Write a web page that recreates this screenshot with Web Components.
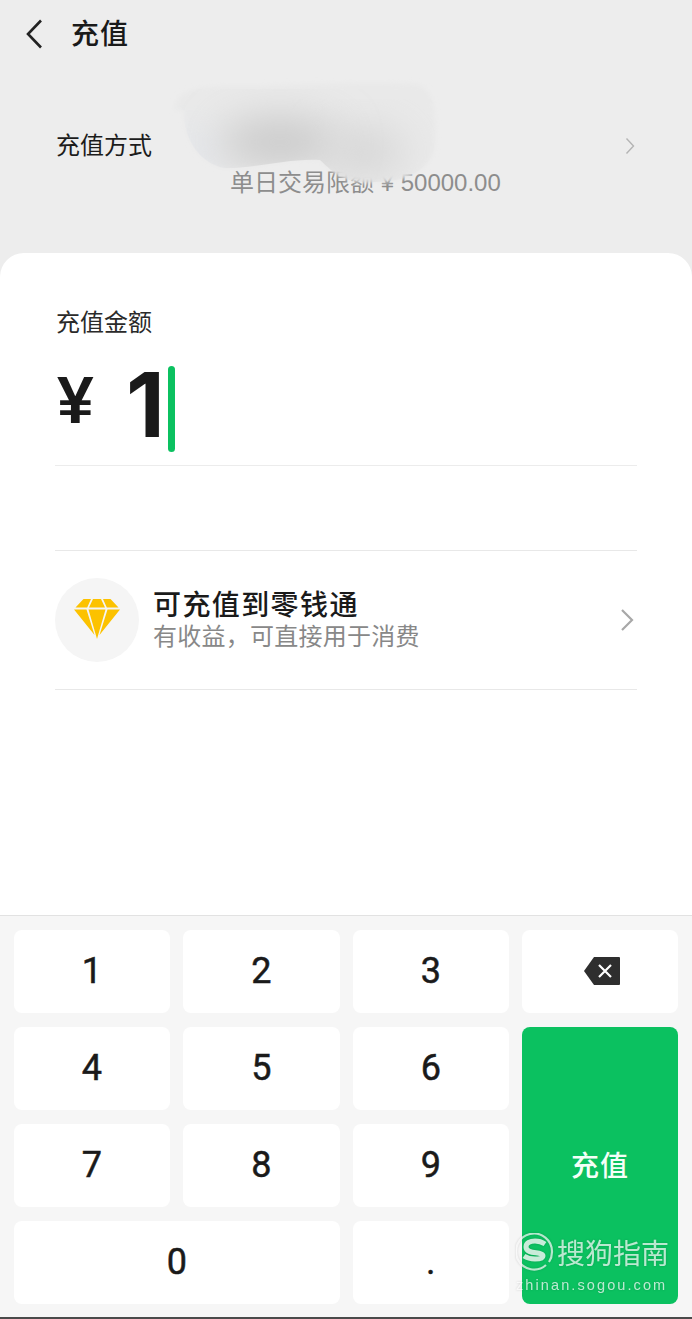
<!DOCTYPE html>
<html lang="zh">
<head>
<meta charset="utf-8">
<title>充值</title>
<style>
html, body { margin: 0; padding: 0; }
body {
  width: 692px;
  height: 1319px;
  overflow: hidden;
  background: #ededed;
  font-family: "Liberation Sans", "Noto Sans CJK SC", sans-serif;
  color: #1a1a1a;
}
</style>
</head>
<body>
<recharge-page></recharge-page>

<script>
const CJK = `"Noto Sans CJK SC", "Liberation Sans", sans-serif`;

class TopBar extends HTMLElement {
  constructor() {
    super();
    this.attachShadow({ mode: "open" });
    this.shadowRoot.innerHTML = `
<style>
:host { display: flex; align-items: center; height: 66px; padding-left: 25px; box-sizing: border-box; }
svg { display: block; width: 18px; height: 30px; margin-top: 2px; }
span { margin-left: 28px; margin-bottom: 3px; font: 500 28px/1 ${CJK}; color: #1a1a1a; letter-spacing: 1px; }
</style>
<svg viewBox="0 0 18 30"><path d="M16 1.5 3 15l13 13.5" fill="none" stroke="#222" stroke-width="2.6"/></svg>
<span><slot></slot></span>`;
  }
}
customElements.define("top-bar", TopBar);

class PayMethod extends HTMLElement {
  constructor() {
    super();
    this.attachShadow({ mode: "open" });
    this.shadowRoot.innerHTML = `
<style>
:host { display: flex; position: relative; height: 187px; padding: 63px 56px 0; box-sizing: border-box; }
.label { font: 400 24px/30px ${CJK}; color: #1c1c1c; width: 174px; flex: none; }
.limit { margin-top: 37px; font: 400 24px/30px ${CJK}; color: #8d8d8d; white-space: nowrap; }
.limit b { font: 400 24px/30px "Liberation Sans", sans-serif; }
.arrow { position: absolute; right: 57px; top: 71px; width: 10px; height: 18px; }
.blob { position: absolute; left: 150px; top: 0; width: 310px; height: 130px; }
</style>
<div class="label">充值方式</div>
<div class="limit">单日交易限额<b> ¥ 50000.00</b></div>
<svg class="arrow" viewBox="0 0 10 18"><path d="M1.500 1.500 8.500 9l-7 7.500" fill="none" stroke="#b4b4b4" stroke-width="1.400"/></svg>
<svg class="blob" viewBox="0 0 310 130">
  <defs>
    <filter id="soft" x="-20%" y="-20%" width="140%" height="140%"><feGaussianBlur stdDeviation="2.500"/></filter>
    <filter id="softer" x="-40%" y="-60%" width="180%" height="220%"><feGaussianBlur stdDeviation="20"/></filter>
    <clipPath id="shape"><path d="M24 44C26 18 60 20 110 20c50-3 130-4 156-2 22 4 20 40 19 60-2 24-26 38-60 38-30 2-40-8-55-22-30-2-62 8-95 8-24-4-42-28-41-58z"/></clipPath>
  </defs>
  <path filter="url(#soft)" fill="#e9e9e9" d="M24 44C26 18 60 20 110 20c50-3 130-4 156-2 22 4 20 40 19 60-2 24-26 38-60 38-30 2-40-8-55-22-30-2-62 8-95 8-24-4-42-28-41-58z"/>
  <g clip-path="url(#shape)">
    <ellipse cx="40" cy="88" rx="32" ry="22" fill="#e2e5ea" filter="url(#softer)"/>
    <ellipse cx="130" cy="76" rx="60" ry="24" fill="#c9c9c9" filter="url(#softer)"/>
    <ellipse cx="215" cy="86" rx="40" ry="24" fill="#d6d6d6" filter="url(#softer)"/>
  </g>
</svg>`;
  }
}
customElements.define("pay-method", PayMethod);

class AmountBox extends HTMLElement {
  constructor() {
    super();
    this.attachShadow({ mode: "open" });
    this.shadowRoot.innerHTML = `
<style>
:host { display: block; height: 213px; padding: 53px 55px 0; box-sizing: border-box; }
.title { font: 400 24px/30px ${CJK}; color: #2a2a2a; padding-left: 1px; }
.input { display: flex; align-items: center; height: 86px; margin-top: 30px; border-bottom: 1px solid #ececec; padding-bottom: 13px; }
.yen { font: 700 66px/1 "Liberation Sans", sans-serif; width: 71px; padding-left: 2px; box-sizing: border-box; color: #1a1a1a; margin-bottom: 18px; }
.num { font: 700 90px/1 Inter, sans-serif; color: #1a1a1a; letter-spacing: -2px; margin-bottom: 8px; }
.caret { width: 7px; height: 86px; border-radius: 4px; background: #0bc160; margin-left: 5px; }
</style>
<div class="title">充值金额</div>
<div class="input">
  <span class="yen">¥</span>
  <span class="num">1</span>
  <span class="caret"></span>
</div>`;
  }
}
customElements.define("amount-box", AmountBox);

class PromoRow extends HTMLElement {
  constructor() {
    super();
    this.attachShadow({ mode: "open" });
    this.shadowRoot.innerHTML = `
<style>
:host { display: flex; align-items: center; margin: 84px 55px 0; height: 140px; box-sizing: border-box; border-top: 1px solid #e8e8e8; border-bottom: 1px solid #e8e8e8; }
.icon { flex: none; width: 84px; height: 84px; border-radius: 50%; background: #f5f5f5; display: flex; align-items: center; justify-content: center; margin-right: 14px; }
.icon svg { width: 48px; height: 44px; display: block; }
.text { flex: 1; margin-bottom: 4px; }
.name { font: 500 28px/33px ${CJK}; color: #1a1a1a; letter-spacing: 1.400px; }
.sub { font: 400 24px/30px ${CJK}; color: #888; letter-spacing: 0.250px; }
.arrow { width: 16px; height: 24px; margin-right: 2px; }
</style>
<div class="icon">
  <svg viewBox="0 0 48 44">
    <path fill="#fcc200" d="M10.500 1H18l-3.800 8.600H2.500zM20 1h8l4 8.600H16zM30 1h7.500l8 8.600H33.800zM1 11.500h12.500L21.500 37zM15.500 11.500h17L24 41zM34.500 11.500H47L26.500 37z"/>
  </svg>
</div>
<div class="text">
  <div class="name"><slot name="name"></slot></div>
  <div class="sub"><slot name="sub"></slot></div>
</div>
<svg class="arrow" viewBox="0 0 16 24"><path d="M3 2l10 10L3 22" fill="none" stroke="#a8a8a8" stroke-width="2.200"/></svg>`;
  }
}
customElements.define("promo-row", PromoRow);

class KeyButton extends HTMLElement {
  constructor() {
    super();
    this.attachShadow({ mode: "open" });
    this.shadowRoot.innerHTML = `
<style>
:host { display: flex; align-items: center; justify-content: center; background: #fff; border-radius: 8px; font: 400 36px/1 Roboto, sans-serif; -webkit-text-stroke: 0.5px #1a1a1a; color: #1a1a1a; box-sizing: border-box; }
:host([primary]) { background: #0bc160; color: #f4fff8; -webkit-text-stroke: 0; font: 500 28px/1 ${CJK}; letter-spacing: 1px; padding-bottom: 3px; }
:host([icon]) { padding-left: 3px; }
</style>
<slot></slot>`;
  }
}
customElements.define("key-button", KeyButton);

class NumPad extends HTMLElement {
  constructor() {
    super();
    this.attachShadow({ mode: "open" });
    this.shadowRoot.innerHTML = `
<style>
:host { display: grid; grid-template-columns: 155.500px 156.500px 155.500px 156px; grid-template-rows: repeat(4, 82.500px); gap: 14.500px 13.500px; padding: 14px; height: 402px; box-sizing: border-box; background: #f6f6f6; border-top: 1px solid #e2e2e2; }
::slotted(.zero) { grid-column: span 2; }
::slotted(.go) { grid-column: 4; grid-row: 2 / span 3; }
</style>
<slot></slot>`;
  }
}
customElements.define("num-pad", NumPad);

class SogouMark extends HTMLElement {
  constructor() {
    super();
    this.attachShadow({ mode: "open" });
    this.shadowRoot.innerHTML = `
<style>
:host { position: absolute; left: 516px; top: 1232px; width: 176px; height: 62px; color: rgba(255,255,255,.72); filter: drop-shadow(0 0 1px rgba(0,0,0,.22)); }
.top { display: flex; align-items: center; height: 40px; }
svg { width: 38px; height: 38px; flex: none; }
.cn { font: 400 28px/1 ${CJK}; margin-left: 3px; white-space: nowrap; }
.url { font: 400 14.500px/1 "Liberation Sans", sans-serif; letter-spacing: 2.100px; margin-top: 6px; white-space: nowrap; }
</style>
<div class="top">
  <svg viewBox="0 0 38 38">
    <path d="M30 32A18 18 0 1 1 36 19c0 4-1 7-3 10" fill="none" stroke="rgba(255,255,255,.7)" stroke-width="2.200"/>
    <path d="M29 11c-3-2-6-3-10-3-5 0-9 2-9 6 0 8 17 4 17 9 0 2-3 3-8 3-4 0-8-1-11-3" fill="none" stroke="rgba(255,255,255,.78)" stroke-width="5"/>
  </svg>
  <span class="cn">搜狗指南</span>
</div>
<div class="url">zhinan.sogou.com</div>`;
  }
}
customElements.define("sogou-mark", SogouMark);

class RechargePage extends HTMLElement {
  constructor() {
    super();
    this.attachShadow({ mode: "open" });
    this.shadowRoot.innerHTML = `
<style>
:host { display: flex; flex-direction: column; position: relative; width: 692px; height: 1319px; overflow: hidden; }
.sheet { display: flex; flex-direction: column; flex: 1; background: #fff; border-radius: 24px 24px 0 0; }
.spacer { flex: 1; }
.bottom { height: 2px; background: #4a4a4a; }
</style>
<top-bar>充值</top-bar>
<pay-method></pay-method>
<div class="sheet">
  <amount-box></amount-box>
  <promo-row>
    <span slot="name">可充值到零钱通</span>
    <span slot="sub">有收益，可直接用于消费</span>
  </promo-row>
  <div class="spacer"></div>
  <num-pad>
    <key-button>1</key-button>
    <key-button>2</key-button>
    <key-button>3</key-button>
    <key-button icon>
      <svg width="36" height="28" viewBox="0 0 36 28" style="display:block"><path fill="#2e2e2e" d="M10 0h25a1 1 0 0 1 1 1v26a1 1 0 0 1-1 1H10L0 14z"/><path d="M15 8l12 12M27 8L15 20" stroke="#fff" stroke-width="2.200"/></svg>
    </key-button>
    <key-button>4</key-button>
    <key-button>5</key-button>
    <key-button>6</key-button>
    <key-button class="go" primary>充值</key-button>
    <key-button>7</key-button>
    <key-button>8</key-button>
    <key-button>9</key-button>
    <key-button class="zero">0</key-button>
    <key-button>.</key-button>
  </num-pad>
  <div class="bottom"></div>
</div>
<sogou-mark></sogou-mark>`;
  }
}
customElements.define("recharge-page", RechargePage);
</script>
</body>
</html>
